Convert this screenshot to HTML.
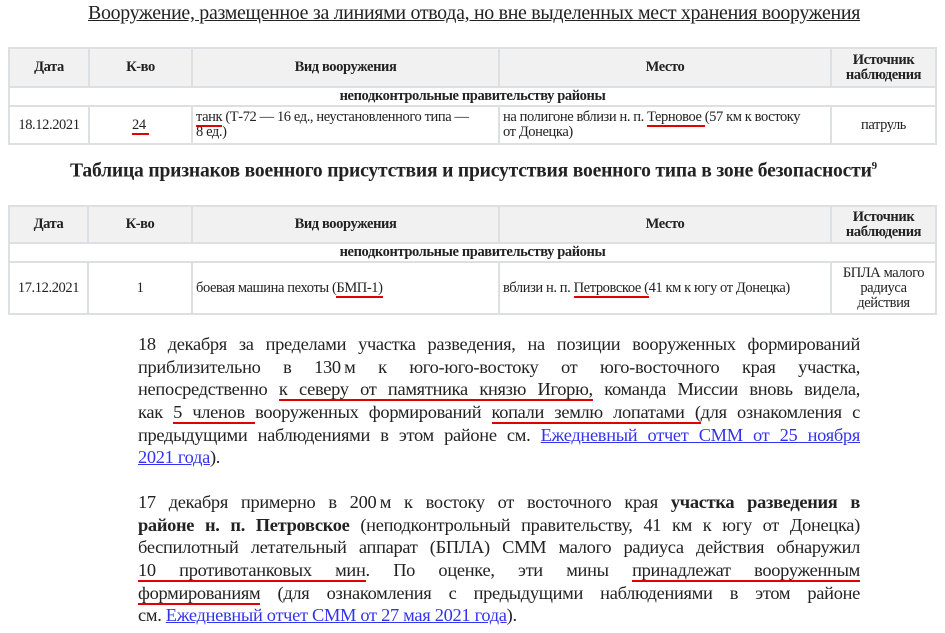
<!DOCTYPE html>
<html><head><meta charset="utf-8"><style>
body{margin:0;width:945px;height:633px;background:#fff;font-family:"Liberation Serif","DejaVu Serif",serif;color:#222;position:relative;overflow:hidden}
.a{position:absolute}
table{border-collapse:collapse;position:absolute;left:8px;width:929px;font-size:14.5px;letter-spacing:-0.4px}
td,th{border:2px solid #dde0e3;padding:1px 3px;line-height:15px}
th{background:#f1f1f1;font-weight:bold;text-align:center}
td{text-align:center}
td.l{text-align:left}
.r{border-bottom:2px solid #e00000}
.p{left:138px;width:722px;font-size:18.4px;line-height:22.7px;letter-spacing:-0.3px}
.p div{text-align:justify;text-align-last:justify;height:22.7px}
.p div.e{text-align-last:left}
a{color:#3333ee;text-decoration:underline}
</style></head><body>
<div class="a" style="left:88px;top:2px;font-size:19.9px;text-decoration:underline;letter-spacing:-0.3px;white-space:nowrap">Вооружение, размещенное за линиями отвода, но вне выделенных мест хранения вооружения</div>
<table style="top:47px">
<colgroup><col style="width:80px"><col style="width:103px"><col style="width:307px"><col style="width:332px"><col></colgroup>
<tr style="height:39px"><th>Дата</th><th>К-во</th><th>Вид вооружения</th><th>Место</th><th>Источник наблюдения</th></tr>
<tr style="height:15px"><th colspan="5" style="background:#fff">неподконтрольные правительству районы</th></tr>
<tr style="height:38px"><td>18.12.2021</td><td><span class="r">24&nbsp;</span></td><td class="l"><span class="r">танк</span> (Т-72 — 16 ед., неустановленного типа —<br>8 ед.)</td><td class="l">на полигоне вблизи н. п. <span class="r">Терновое </span>(57 км к востоку<br>от Донецка)</td><td>патруль</td></tr>
</table>
<div class="a" style="left:70px;top:160px;font-size:19.6px;font-weight:bold;letter-spacing:-0.2px;white-space:nowrap">Таблица признаков военного присутствия и присутствия военного типа в зоне безопасности<sup style="font-size:11px">9</sup></div>
<table style="top:205px">
<colgroup><col style="width:79px"><col style="width:104px"><col style="width:307px"><col style="width:332px"><col></colgroup>
<tr style="height:37px"><th>Дата</th><th>К-во</th><th>Вид вооружения</th><th>Место</th><th>Источник<br>наблюдения</th></tr>
<tr style="height:18px"><th colspan="5" style="background:#fff">неподконтрольные правительству районы</th></tr>
<tr style="height:52px"><td>17.12.2021</td><td>1</td><td class="l">боевая машина пехоты (<span class="r">БМП-1)</span></td><td class="l">вблизи н. п. <span class="r">Петровское (</span>41 км к югу от Донецка)</td><td>БПЛА малого<br>радиуса<br>действия</td></tr>
</table>
<div class="a p" style="top:333px">
<div>18 декабря за пределами участка разведения, на позиции вооруженных формирований</div>
<div>приблизительно в 130&#8201;м к юго-юго-востоку от юго-восточного края участка,</div>
<div>непосредственно <span class="r">к северу от памятника князю Игорю,</span> команда Миссии вновь видела,</div>
<div>как <span class="r">5 членов </span>вооруженных формирований <span class="r">копали землю лопатами (</span>для ознакомления с</div>
<div>предыдущими наблюдениями в этом районе см. <a>Ежедневный отчет СММ от 25 ноября</a></div>
<div class="e"><a>2021 года</a>).</div>
</div>
<div class="a p" style="top:491px">
<div>17 декабря примерно в 200&#8201;м к востоку от восточного края <b>участка разведения в</b></div>
<div><b>районе н. п. Петровское</b> (неподконтрольный правительству, 41 км к югу от Донецка)</div>
<div>беспилотный летательный аппарат (БПЛА) СММ малого радиуса действия обнаружил</div>
<div><span class="r">10 противотанковых мин</span>. По оценке, эти мины <span class="r">принадлежат вооруженным</span></div>
<div><span class="r">формированиям</span> (для ознакомления с предыдущими наблюдениями в этом районе</div>
<div class="e">см. <a>Ежедневный отчет СММ от 27 мая 2021 года</a>).</div>
</div>
</body></html>
